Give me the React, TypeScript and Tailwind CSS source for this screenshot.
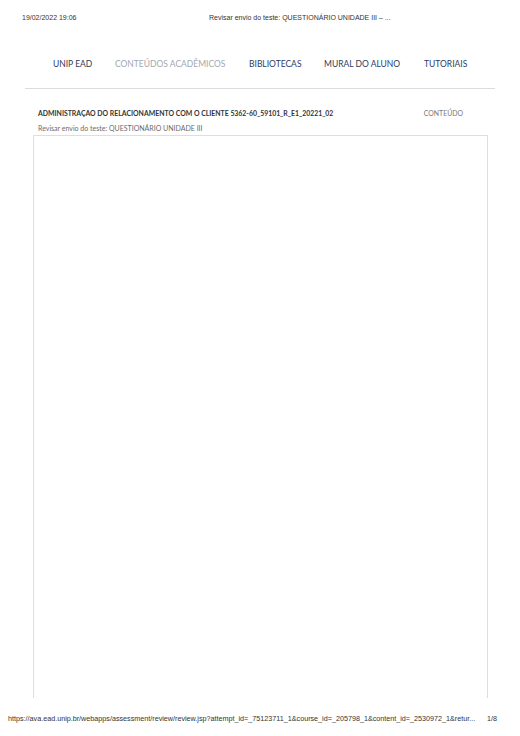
export default function App() {
  const nav = [
    { label: "UNIP EAD", w: "w-[62px]", cls: "text-[#2e3b5c]" },
    { label: "CONTEÚDOS ACADÊMICOS", w: "w-[134px]", cls: "text-[#a3a8b1]" },
    { label: "BIBLIOTECAS", w: "w-[75px]", cls: "text-[#2e3b5c]" },
    { label: "MURAL DO ALUNO", w: "w-[100px]", cls: "text-[#2e3b5c]" },
    { label: "TUTORIAIS", w: "w-auto", cls: "text-[#2e3b5c]" },
  ];

  return (
    <div className="h-[736px] w-[520px] bg-white flex flex-col overflow-hidden">
      {/* print header */}
      <div className="flex pt-[13px] pl-[22px] text-[7px] leading-[9px] text-[#333] font-['Liberation_Sans',Arial,sans-serif]">
        <span className="w-[187px]">19/02/2022 19:06</span>
        <span>Revisar envio do teste: QUESTIONÁRIO UNIDADE III – ...</span>
      </div>

      {/* top nav */}
      <div className="flex pl-[53px] mt-[37px] text-[8.5px] leading-[11px] font-['Lato','Open_Sans',sans-serif]">
        {nav.map((n) => (
          <span key={n.label} className={`${n.w} shrink-0 ${n.cls}`}>
            {n.label}
          </span>
        ))}
      </div>
      <div className="mx-[25px] mt-[18px] border-t border-[#dcdcdc]" />

      {/* course */}
      <div className="flex justify-between pl-[38px] pr-[57px] mt-[20px] text-[6.9px] leading-[9px] font-['Lato','Open_Sans',sans-serif]">
        <span className="font-bold text-[#333]">
          ADMINISTRAÇAO DO RELACIONAMENTO COM O CLIENTE 5362-60_59101_R_E1_20221_02
        </span>
        <span className="text-[#777]">CONTEÚDO</span>
      </div>
      <div className="pl-[38px] mt-[6px] text-[7px] leading-[9px] text-[#6b6b6b] font-['Lato','Open_Sans',sans-serif]">
        Revisar envio do teste: QUESTIONÁRIO UNIDADE III
      </div>

      {/* content frame */}
      <div className="ml-[33px] w-[455px] mt-[2px] h-[563px] border-t border-l border-r border-[#dedede]" />

      {/* print footer */}
      <div className="flex pl-[8px] mt-[16px] text-[7.2px] leading-[9px] text-[#333] font-['Liberation_Sans',Arial,sans-serif]">
        <span className="w-[479px] whitespace-nowrap overflow-hidden">
          https://ava.ead.unip.br/webapps/assessment/review/review.jsp?attempt_id=_75123711_1&amp;course_id=_205798_1&amp;content_id=_2530972_1&amp;retur...
        </span>
        <span>1/8</span>
      </div>
    </div>
  );
}
